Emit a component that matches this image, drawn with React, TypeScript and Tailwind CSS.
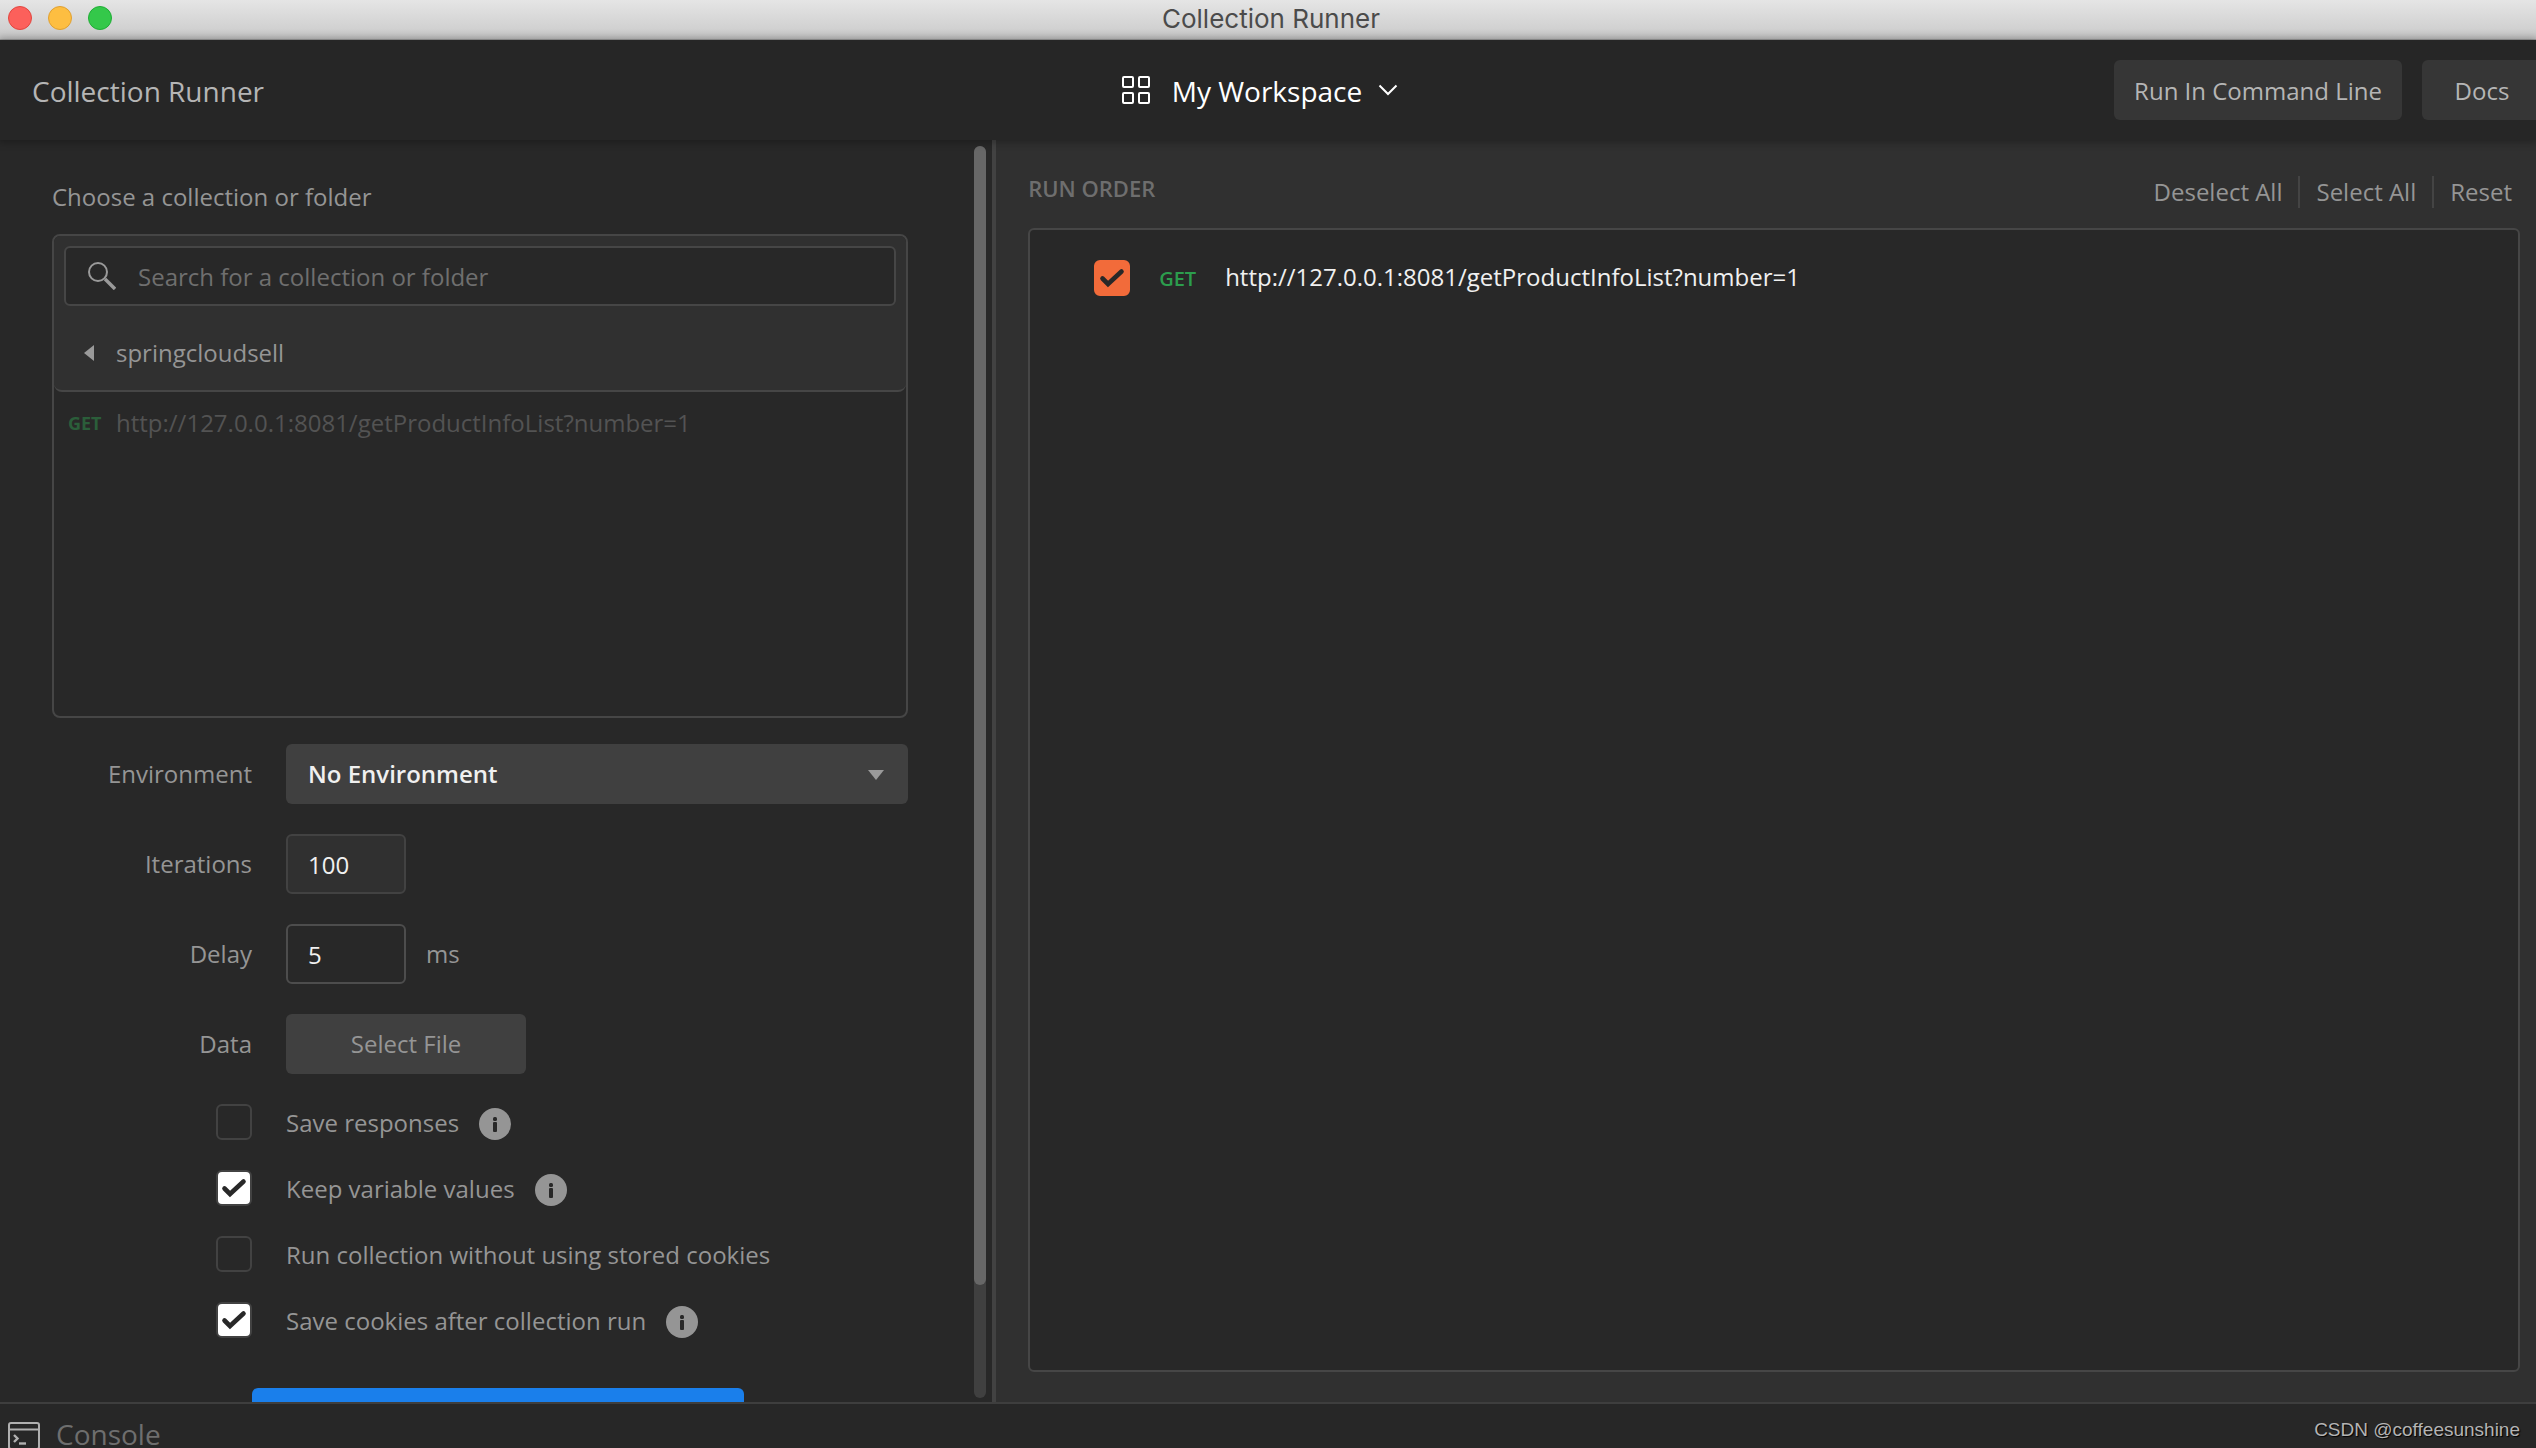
import { useState, type ReactNode } from "react";

const REQUEST_URL = "http://127.0.0.1:8081/getProductInfoList?number=1";

interface Option { id: string; label: string; checked: boolean; info: boolean; }

const OPTIONS: Option[] = [
  { id: "save-responses", label: "Save responses", checked: false, info: true },
  { id: "keep-variables", label: "Keep variable values", checked: true, info: true },
  { id: "no-cookies", label: "Run collection without using stored cookies", checked: false, info: false },
  { id: "save-cookies", label: "Save cookies after collection run", checked: true, info: true },
];

function CheckMark() {
  return (
    <svg viewBox="0 0 36 36" className="pointer-events-none col-start-1 row-start-1 size-9 opacity-0 peer-checked:opacity-100" fill="none">
      <path d="M8.5 18.5 L14 24 L27.5 11.5" stroke="#282828" strokeWidth="4.6" strokeLinecap="round" />
    </svg>
  );
}

function InfoIcon() {
  return (
    <svg viewBox="0 0 32 32" className="size-8">
      <circle cx="16" cy="16" r="16" fill="#959595" />
      <rect x="14" y="9" width="4" height="4" rx="1.5" fill="#282828" />
      <rect x="14" y="14" width="4" height="10" rx="1" fill="#282828" />
    </svg>
  );
}

function TitleBar() {
  return (
    <div className="grid h-10 shrink-0 grid-cols-[1fr_auto_1fr] border-b border-[#a6a6a6] bg-linear-to-b from-[#e5e5e5] to-[#cacaca]">
      <div className="flex gap-4 pl-2 pt-1.5">
        <span className="size-6 rounded-full border border-[#e2463f] bg-[#fc605b]" />
        <span className="size-6 rounded-full border border-[#e0a031] bg-[#fdbe41]" />
        <span className="size-6 rounded-full border border-[#1fae35] bg-[#34c84a]" />
      </div>
      <span className="pl-1.5 font-['Inter',sans-serif] text-[26px] leading-[38px] text-[#4b4b4b]">Collection Runner</span>
    </div>
  );
}

function Header() {
  return (
    <header className="relative z-10 grid h-[100px] shrink-0 grid-cols-[1fr_auto_1fr] items-center bg-[#262626] shadow-[0_0_8px_2px_rgba(0,0,0,0.3)]">
      <h1 className="pl-8 pt-0.5 text-[28px] leading-9 text-[#b5b5b5]">Collection Runner</h1>
      <button className="flex items-center text-[28px] leading-9 text-white">
        <svg viewBox="0 0 28 28" className="mr-[22px] size-7" fill="none" stroke="#fff" strokeWidth="2">
          <rect x="1" y="1" width="10" height="10" rx="1" />
          <rect x="17" y="1" width="10" height="10" rx="1" />
          <rect x="1" y="17" width="10" height="10" rx="1" />
          <rect x="17" y="17" width="10" height="10" rx="1" />
        </svg>
        <span className="pt-0.5">My Workspace</span>
        <svg viewBox="0 0 20 12" className="mx-4 h-3 w-5" fill="none" stroke="#fff" strokeWidth="2">
          <path d="M1.5 1.5 L10 10 L18.5 1.5" />
        </svg>
      </button>
      <div className="-mr-1.5 flex justify-end gap-5 text-[24px] leading-8 text-[#b5b5b5]">
        <button className="h-[60px] rounded-md bg-[#363636] px-5 pt-0.5">Run In Command Line</button>
        <button className="h-[60px] w-[120px] rounded-md bg-[#363636] pt-0.5">Docs</button>
      </div>
    </header>
  );
}

function CollectionPicker() {
  return (
    <div className="mt-[21px] h-[484px] rounded-lg border-2 border-[#464646]">
      <div className="rounded-b-lg rounded-t-md border-b-2 border-[#464646] bg-[#303030] px-2.5 pt-2.5">
        <label className="flex h-[60px] items-center rounded-md border-2 border-[#464646] bg-[#282828] pl-[22px]">
          <svg viewBox="0 0 28 28" className="size-7 shrink-0" fill="none" stroke="#9a9a9a">
            <circle cx="10" cy="10" r="9" strokeWidth="2" />
            <path d="M17 17 L27 27" strokeWidth="3.4" />
          </svg>
          <input
            type="text"
            aria-label="Search for a collection or folder"
            placeholder="Search for a collection or folder"
            className="ml-[22px] min-w-0 flex-1 bg-transparent pt-0.5 leading-8 outline-none placeholder:text-[#6f6f6f]"
          />
        </label>
        <button className="flex h-[84px] w-full items-center pl-5 pt-2.5">
          <svg viewBox="0 0 10 16" className="mr-[22px] h-4 w-2.5" fill="#9a9a9a">
            <path d="M10 0 V16 L0 8 Z" />
          </svg>
          springcloudsell
        </button>
      </div>
      <div className="flex h-[62px] items-center pl-3.5">
        <span className="w-12 text-[18px] font-bold text-[#2b5e3a]">GET</span>
        <span className="text-[#535353]">{REQUEST_URL}</span>
      </div>
    </div>
  );
}

function Field({ id, label, children }: { id: string; label: string; children: ReactNode }) {
  return (
    <div className="flex h-[60px] items-center">
      <label htmlFor={id} className="w-[234px] shrink-0 pr-[34px] text-right">{label}</label>
      {children}
    </div>
  );
}

function RunSettings() {
  const [options, setOptions] = useState(OPTIONS);
  const [iterations, setIterations] = useState("100");
  const [delay, setDelay] = useState("5");

  const toggle = (id: string) =>
    setOptions((list) => list.map((o) => (o.id === id ? { ...o, checked: !o.checked } : o)));

  return (
    <div className="mt-[26px]">
      <div className="flex flex-col gap-[30px]">
        <Field id="environment" label="Environment">
          <div className="relative flex-1">
            <select id="environment" className="h-[60px] w-full appearance-none rounded-md bg-[#404040] px-[22px] font-semibold text-[#f0f0f0]">
              <option>No Environment</option>
            </select>
            <svg viewBox="0 0 16 10" className="pointer-events-none absolute right-6 top-[26px] h-2.5 w-4" fill="#9a9a9a">
              <path d="M0 0 H16 L8 10 Z" />
            </svg>
          </div>
        </Field>
        <Field id="iterations" label="Iterations">
          <input
            id="iterations"
            type="text"
            value={iterations}
            onChange={(e) => setIterations(e.target.value)}
            className="h-[60px] w-[120px] rounded-md border-2 border-[#424242] bg-[#303030] px-5 text-[#f0f0f0]"
          />
        </Field>
        <Field id="delay" label="Delay">
          <input
            id="delay"
            type="text"
            value={delay}
            onChange={(e) => setDelay(e.target.value)}
            className="h-[60px] w-[120px] rounded-md border-2 border-[#4d4d4d] bg-[#282828] px-5 text-[#f0f0f0]"
          />
          <span className="pl-5">ms</span>
        </Field>
        <Field id="data" label="Data">
          <button id="data" className="h-[60px] w-60 rounded-md bg-[#404040]">Select File</button>
        </Field>
      </div>

      <div className="mt-[30px] flex flex-col gap-[30px] pl-[164px]">
        {options.map((o) => (
          <div key={o.id} className="flex h-9 items-center">
            <span className="mr-[34px] grid size-9">
              <input
                id={o.id}
                type="checkbox"
                checked={o.checked}
                onChange={() => toggle(o.id)}
                className="peer col-start-1 row-start-1 size-9 appearance-none rounded-md border-2 border-[#424242] checked:bg-white"
              />
              <CheckMark />
            </span>
            <label htmlFor={o.id} className="pt-0.5">{o.label}</label>
            {o.info && (
              <button aria-label={`About: ${o.label}`} className="ml-5 pt-1">
                <InfoIcon />
              </button>
            )}
          </div>
        ))}
      </div>

      <button aria-label="Run" className="ml-[200px] mt-[50px] block h-[60px] w-[492px] rounded-md bg-[#1a7feb]" />
    </div>
  );
}

function RunOrder() {
  const [selected, setSelected] = useState(true);

  return (
    <section className="flex min-w-0 flex-1 flex-col bg-[#303030] pb-[30px] pl-8 pr-4 pt-[34px]">
      <div className="flex h-[54px] items-start justify-between">
        <h2 className="text-[22px] font-semibold leading-7 text-[#6e6e6e]">RUN ORDER</h2>
        <div className="mt-0.5 flex divide-x-2 divide-[#444444] leading-8">
          <button className="px-4">Deselect All</button>
          <button className="px-4" onClick={() => setSelected(true)}>Select All</button>
          <button className="pl-4 pr-2">Reset</button>
        </div>
      </div>
      <div className="flex-1 rounded-md border-2 border-[#464646] bg-[#282828] pl-16 pt-[30px]">
        <label className="flex h-9 items-center">
          <span className="grid size-9">
            <input
              type="checkbox"
              checked={selected}
              onChange={() => setSelected(!selected)}
              className="peer col-start-1 row-start-1 size-9 appearance-none rounded-md border-2 border-[#424242] checked:border-[#f26b3a] checked:bg-[#f26b3a]"
            />
            <CheckMark />
          </span>
          <span className="ml-[29px] w-[66px] pt-0.5 text-[20px] font-semibold text-[#2c9d4d]">GET</span>
          <span className="pb-0.5 text-[#f0f0f0]">{REQUEST_URL}</span>
        </label>
      </div>
    </section>
  );
}

function StatusBar() {
  return (
    <footer className="flex h-[46px] shrink-0 items-start justify-between overflow-hidden border-t-2 border-[#3e3e3e] bg-[#272727] pl-2 pr-4">
      <button className="flex items-start pt-[18px]">
        <svg viewBox="0 0 32 28" className="h-7 w-8" fill="none" stroke="#b0b0b0" strokeWidth="2">
          <rect x="1" y="1" width="30" height="26" rx="2" />
          <path d="M1 7.5 H31" />
          <path d="M6 13 L9.5 16.5 L6 20" strokeWidth="2.4" />
          <path d="M11 21.5 H18" strokeWidth="2.4" />
        </svg>
        <span className="ml-4 text-[28px] leading-6 text-[#6e6e6e]">Console</span>
      </button>
      <span className="pt-3.5 font-['Liberation_Sans',sans-serif] text-[19px] leading-6 text-[#b4b4b4] [text-shadow:1px_1px_1px_#000]">
        CSDN @coffeesunshine
      </span>
    </footer>
  );
}

export default function App() {
  return (
    <div className="flex h-screen flex-col overflow-hidden bg-[#282828] font-['Open_Sans',sans-serif] text-[24px] leading-8 text-[#959595]">
      <TitleBar />
      <Header />
      <main className="flex min-h-0 flex-1">
        <section className="flex w-[39.28%] shrink-0 overflow-hidden border-r-4 border-[#424242]">
          <div className="min-w-0 flex-1 pl-[52px] pr-[66px] pt-[41px]">
            <h2>Choose a collection or folder</h2>
            <CollectionPicker />
            <RunSettings />
          </div>
          {/* scroll bar */}
          <div className="mb-1 mr-1.5 mt-1.5 w-3 rounded-full bg-[#404040]">
            <div className="h-[91%] rounded-full bg-[#676767]" />
          </div>
        </section>
        <RunOrder />
      </main>
      <StatusBar />
    </div>
  );
}
